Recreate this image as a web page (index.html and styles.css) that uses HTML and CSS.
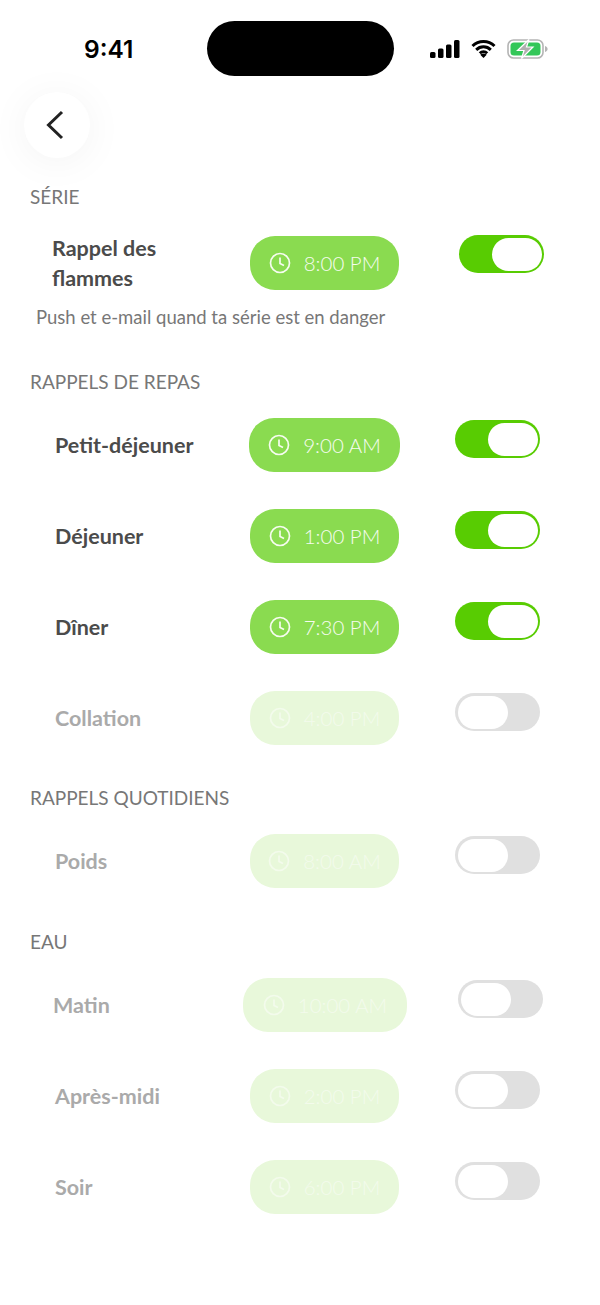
FILE: index.html
```html
<!doctype html>
<html lang="fr">
<head>
    <meta charset="UTF-8">
    <title>Rappels</title>
    <link rel="stylesheet" href="styles.css">
</head>
<body>
    <div id="status">
        <span class="time">9:41</span>
        <div class="island"></div>
        <div class="status-icons">
            <svg class="signal" width="30" height="18" viewBox="0 0 30 18">
                <rect x="0" y="12" width="5.5" height="6" rx="1.5"/>
                <rect x="8" y="8.5" width="5.5" height="9.5" rx="1.5"/>
                <rect x="16" y="4.5" width="5.5" height="13.5" rx="1.5"/>
                <rect x="24" y="0" width="5.5" height="18" rx="1.5"/>
            </svg>
            <svg class="wifi" width="25" height="19" viewBox="0 0 25 19">
                <path d="M1.500 7a15.500 15.500 0 0 1 22 0M5.200 10.800a10.500 10.500 0 0 1 14.600 0M8.800 14.300a5.300 5.300 0 0 1 7.400 0" fill="none" stroke="#000" stroke-width="3"/>
                <path d="M12.500 19l-3.200-3.200a4.500 4.500 0 0 1 6.400 0z"/>
            </svg>
            <svg class="battery" width="41" height="20" viewBox="0 0 41 20">
                <rect x="1" y="1" width="35" height="18" rx="5.500" fill="#fff" stroke="#b4b4b4" stroke-width="1.600"/>
                <rect x="3.500" y="3.500" width="30" height="13" rx="3.500" fill="#34c759"/>
                <path d="M38 7v6c1.600-.5 2.600-1.600 2.600-3s-1-2.500-2.600-3z" fill="#b4b4b4"/>
                <path d="M22 .5L10.500 11.500H17l-2.500 8L26 8h-6.500z" fill="#b0b0b0" stroke="#fff" stroke-width="1.200"/>
            </svg>
        </div>
    </div>

    <div id="back">
        <svg width="20" height="30" viewBox="0 0 20 30">
            <path d="M17 2L3.500 15 17 28" fill="none" stroke="#222" stroke-width="3"/>
        </svg>
    </div>

    <h2 class="title title-first">SÉRIE</h2>
    <div class="row row-streak">
        <div class="label">Rappel des flammes</div>
        <div class="pill">
            <svg class="clock" viewBox="0 0 22 22"><circle cx="11" cy="11" r="9.500"/><path d="M11 5.500V11.500L15 13.500"/></svg>
            <span>8:00 PM</span>
        </div>
        <div class="toggle on"><i></i></div>
    </div>
    <p class="hint">Push et e-mail quand ta série est en danger</p>

    <h2 class="title title-meals">RAPPELS DE REPAS</h2>
    <div class="row row-wide">
        <div class="label">Petit-déjeuner</div>
        <div class="pill">
            <svg class="clock" viewBox="0 0 22 22"><circle cx="11" cy="11" r="9.500"/><path d="M11 5.500V11.500L15 13.500"/></svg>
            <span>9:00 AM</span>
        </div>
        <div class="toggle on"><i></i></div>
    </div>
    <div class="row">
        <div class="label">Déjeuner</div>
        <div class="pill">
            <svg class="clock" viewBox="0 0 22 22"><circle cx="11" cy="11" r="9.500"/><path d="M11 5.500V11.500L15 13.500"/></svg>
            <span>1:00 PM</span>
        </div>
        <div class="toggle on"><i></i></div>
    </div>
    <div class="row">
        <div class="label">Dîner</div>
        <div class="pill">
            <svg class="clock" viewBox="0 0 22 22"><circle cx="11" cy="11" r="9.500"/><path d="M11 5.500V11.500L15 13.500"/></svg>
            <span>7:30 PM</span>
        </div>
        <div class="toggle on"><i></i></div>
    </div>
    <div class="row off">
        <div class="label">Collation</div>
        <div class="pill">
            <svg class="clock" viewBox="0 0 22 22"><circle cx="11" cy="11" r="9.500"/><path d="M11 5.500V11.500L15 13.500"/></svg>
            <span>4:00 PM</span>
        </div>
        <div class="toggle"><i></i></div>
    </div>

    <h2 class="title">RAPPELS QUOTIDIENS</h2>
    <div class="row row-poids off">
        <div class="label">Poids</div>
        <div class="pill">
            <svg class="clock" viewBox="0 0 22 22"><circle cx="11" cy="11" r="9.500"/><path d="M11 5.500V11.500L15 13.500"/></svg>
            <span>8:00 AM</span>
        </div>
        <div class="toggle"><i></i></div>
    </div>

    <h2 class="title title-water">EAU</h2>
    <div class="row off row-morning">
        <div class="label">Matin</div>
        <div class="pill">
            <svg class="clock" viewBox="0 0 22 22"><circle cx="11" cy="11" r="9.500"/><path d="M11 5.500V11.500L15 13.500"/></svg>
            <span>10:00 AM</span>
        </div>
        <div class="toggle"><i></i></div>
    </div>
    <div class="row off">
        <div class="label">Après-midi</div>
        <div class="pill">
            <svg class="clock" viewBox="0 0 22 22"><circle cx="11" cy="11" r="9.500"/><path d="M11 5.500V11.500L15 13.500"/></svg>
            <span>2:00 PM</span>
        </div>
        <div class="toggle"><i></i></div>
    </div>
    <div class="row off">
        <div class="label">Soir</div>
        <div class="pill">
            <svg class="clock" viewBox="0 0 22 22"><circle cx="11" cy="11" r="9.500"/><path d="M11 5.500V11.500L15 13.500"/></svg>
            <span>6:00 PM</span>
        </div>
        <div class="toggle"><i></i></div>
    </div>
</body>
</html>
```

FILE: styles.css
```css
*{
    margin: 0;
    padding: 0;
    box-sizing: border-box;
}
body{
    width: 600px;
    height: 1305px;
    background: #fff;
    font-family: "Lato", "Noto Sans", sans-serif;
    overflow: hidden;
}
/***status bar***/
#status{
    display: flex;
    align-items: center;
    height: 55px;
    margin-top: 21px;
    padding-left: 84px;
}
.time{
    width: 123px;
    font-family: "Inter", sans-serif;
    font-size: 24.5px;
    font-weight: 600;
    color: #000;
}
.island{
    width: 187px;
    height: 55px;
    border-radius: 28px;
    background: #000;
}
.status-icons{
    display: flex;
    align-items: center;
    margin-left: 36px;
}
.wifi{
    margin-left: 11px;
}
.battery{
    margin-left: 11px;
}
#back{
    display: flex;
    align-items: center;
    justify-content: center;
    width: 66px;
    height: 66px;
    margin: 16px 0 0 24px;
    border-radius: 50%;
    background: #fff;
    box-shadow: 0 4px 40px rgba(0,0,0,.05);
}
#back svg{
    margin-right: 4px;
}
/***sections***/
.title{
    height: 24px;
    margin: 41px 0 0 30px;
    font-size: 19px;
    font-weight: 400;
    line-height: 24px;
    color: #777;
}
.title-first{
    margin-top: 27px;
}
.title-meals{
    margin-top: 42px;
}
.title-water{
    margin-top: 42px;
}
.row{
    display: flex;
    align-items: center;
    height: 54px;
    margin-top: 24px;
    padding-left: 55px;
}
.row + .row{
    margin-top: 37px;
}
.label{
    width: 195px;
    font-size: 21.5px;
    font-weight: 700;
    line-height: 30px;
    color: #4b4b4b;
}
.pill{
    display: flex;
    align-items: center;
    justify-content: center;
    gap: 13px;
    width: 149px;
    height: 54px;
    border-radius: 25px;
    background: #8adb50;
    font-size: 20.5px;
    font-weight: 300;
    color: #f6fcf0;
}
.clock{
    width: 22px;
    height: 22px;
    fill: none;
    stroke: #f6fcf0;
    stroke-width: 1.7;
}
.toggle{
    display: flex;
    justify-content: flex-end;
    align-self: flex-start;
    width: 85px;
    height: 38px;
    margin: 2px 0 0 56px;
    padding: 2.5px;
    border-radius: 19px;
    background: #58cc02;
}
.toggle i{
    display: block;
    width: 50px;
    height: 33px;
    border-radius: 16.5px;
    background: #fff;
}
/***disabled rows***/
.off .label{
    color: #aaa;
}
.off .pill{
    background: #e8f8da;
    color: #f3fbec;
}
.off .clock{
    stroke: #f3fbec;
}
.off .toggle{
    justify-content: flex-start;
    background: #e0e0e0;
}
/***rows that sit a little off the grid***/
.row-streak{
    margin-top: 27px;
    padding-left: 52px;
}
.row-streak .label{
    width: 198px;
    padding-right: 70px;
}
.row-streak .toggle{
    margin: -1px 0 0 60px;
}
.hint{
    margin: 16px 0 0 36px;
    font-size: 18.5px;
    line-height: 22px;
    color: #777;
}
.row-wide{
    padding-left: 55px;
}
.row-wide .label{
    width: 194px;
}
.row-wide .pill{
    width: 151px;
}
.row-wide .toggle{
    margin-left: 55px;
}
.row-morning{
    padding-left: 53px;
}
.row-morning .label{
    width: 190px;
}
.row-morning .pill{
    width: 164px;
}
.row-morning .toggle{
    margin-left: 51px;
}
```
